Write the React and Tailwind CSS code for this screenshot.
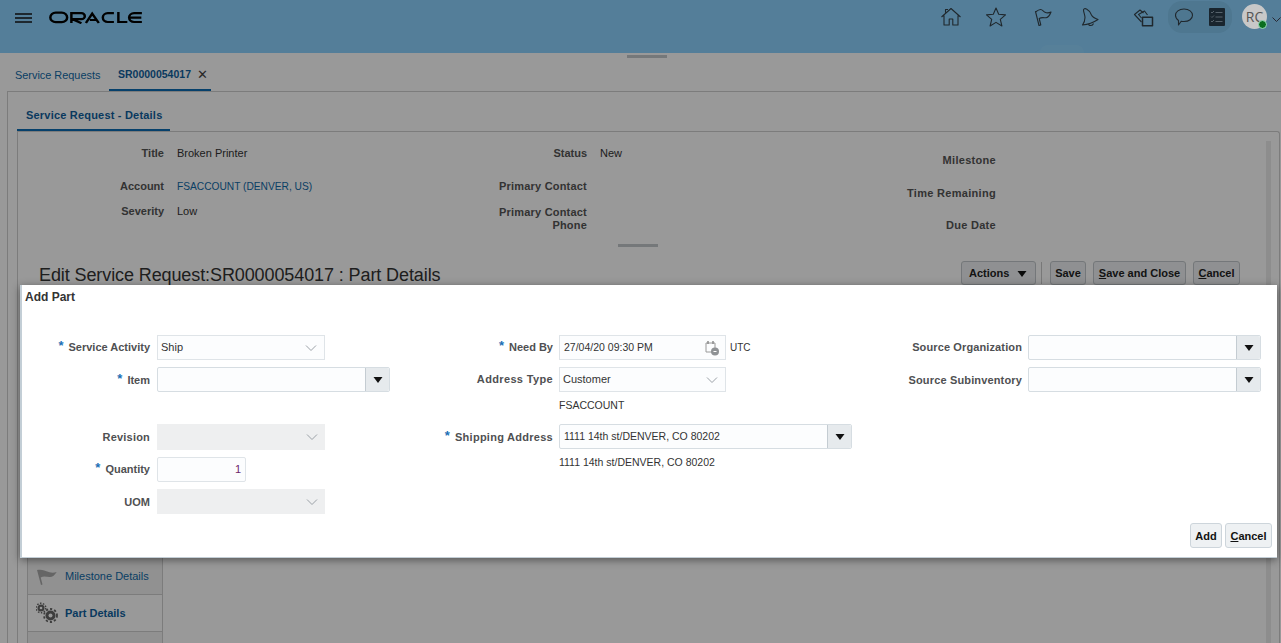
import React from "react";

const Caret = ({ className = "" }) => (
  <svg width="10" height="6" viewBox="0 0 10 6" className={className}>
    <path d="M.5 0h9L5 6z" fill="#111" />
  </svg>
);

const Chevron = () => (
  <svg width="12" height="7" viewBox="0 0 12 7" className="absolute right-[7px] top-1/2 -translate-y-1/2">
    <path d="M1 1l5 5 5-5" fill="none" stroke="#9aa0a6" strokeWidth="1" />
  </svg>
);

const Star = () => <span className="text-[#1c6fb5] text-[13px] leading-none mr-[5px] relative -top-[1px]">*</span>;

const FLabel = ({ req, children, w, t = "" }) => (
  <div className={`shrink-0 text-right font-bold text-[#4f5052] text-[11px] leading-[13px] whitespace-nowrap ${w} ${t}`}>
    {req && <Star />}
    {children}
  </div>
);

const Select = ({ w, value, disabled, h = "h-[25px]" }) => (
  <div className={`relative ${h} flex items-center pl-[3px] text-[11px] text-[#333] ${w} ${disabled ? "bg-[#eeeff0]" : "bg-[#fcfdfe] border border-[#dfe4e8]"}`}>
    {value}
    <Chevron />
  </div>
);

const Combo = ({ w, value }) => (
  <div className={`flex shrink-0 h-[25px] rounded-[2px] border border-[#d6dde2] bg-[#fcfdfe] ${w}`}>
    <div className="flex-1 flex items-center pl-[4px] text-[10.5px] text-[#333]">{value}</div>
    <div className="w-[24px] flex items-center justify-center border-l border-[#c4ccd2] bg-[#e6eaed] rounded-r-[2px]">
      <Caret />
    </div>
  </div>
);

const Ghost = ({ className, children }) => (
  <div className={`h-[24px] pt-[1px] flex items-center justify-center rounded-[3px] border border-[#c2c7cb] bg-[#eef1f3] font-bold text-[11px] text-[#222] ${className}`}>
    {children}
  </div>
);

const Ico = ({ children, className = "" }) => (
  <svg width="24" height="24" viewBox="0 0 24 24" fill="none" stroke="#35424b" strokeWidth="1.1" strokeLinejoin="round" className={className}>
    {children}
  </svg>
);

function TopBar() {
  return (
    <div className="h-[53px] bg-[#8cd3ff] flex items-start relative">
      <div className="mt-[13px] ml-[15px] flex flex-col gap-[2px] w-[17px]">
        <div className="h-[2px] bg-[#33434f]" />
        <div className="h-[2px] bg-[#33434f]" />
        <div className="h-[2px] bg-[#33434f]" />
      </div>
      <svg width="94" height="13" viewBox="0 0 84 13" preserveAspectRatio="none" className="ml-[17px] mt-[11px]" fill="none" stroke="#000" strokeWidth="2.2">
        <rect x="1.2" y="1.6" width="15" height="9.6" rx="4.8" />
        <path d="M20 12V2.200h9a3 3 0 010 6h-8l8 4" />
        <path d="M33 12l5.600-9.400L44.500 12M36.500 9h6" />
        <path d="M58 2.200h-5.500a4.400 4.400 0 000 8.800H58" />
        <path d="M62 1v10h8" />
        <path d="M83 2.200h-7a4.400 4.400 0 000 8.800h7M72.500 6.600h10" />
      </svg>
      <div className="ml-auto flex items-start">
        <Ico className="mt-[5px] mr-[21px]"><path d="M2.500 12L12 3.500l9.500 8.500M5 10.500V20h5.200v-6h3.600v6H19v-9.500M6.500 7.500V4.500H9" /></Ico>
        <Ico className="mt-[5px] mr-[23px]"><path d="M12 3l2.700 6.300 6.800.6-5.200 4.400 1.600 6.700-5.900-3.600-5.900 3.600 1.600-6.700-5.200-4.400 6.800-.6z" /></Ico>
        <Ico className="mt-[5px] mr-[23px]"><path d="M4.500 6.500L8 20.500l1.800-.5-1.600-6.500c2.500-1.500 5-.5 7-.8 2-.4 3.800-3 4.800-5.700-2 1-4 1.200-6 .3-1.500-.7-2.500-2.800-4.500-2.800-1.500 0-3 1-5 2.500z" /></Ico>
        <Ico className="mt-[5px] mr-[29px]"><path d="M4.500 20c1.500-2 2.500-4.500 2.500-7.500C7 10 5.500 7 5.500 5c0-1.300 1.500-1.800 3-1 3 1.500 4 3.500 5 6 1 2 3.500 3.500 6.500 4.500-4.500 3-10 5-15.500 5.500zM10.500 18.500c0 2.500 4 3 5 0" /></Ico>
        <Ico className="mt-[5px] mr-[13px]">
          <path d="M10.500 17L3.500 9.500 9 5l3.500 3" />
          <path d="M10.500 13L7.500 9.500l6-3.500 3 4" />
          <rect x="11.500" y="12.300" width="10" height="8.400" strokeWidth="1.500" />
        </Ico>
        <div className="mt-[1px] h-[32px] w-[64px] rounded-[14px] bg-[#83c6f0] flex items-center">
          <Ico className="ml-[4px]"><path d="M12 4c5 0 8.500 2.800 8.500 6.300s-3.500 6.200-8.500 6.200c-1 0-2 0-2.800-.3L6.500 20v-4.500C4.800 14.300 3.500 12.500 3.500 10.300 3.500 6.800 7 4 12 4z" /></Ico>
          <svg width="16" height="18" viewBox="0 0 16 18" className="ml-[13px]">
            <rect width="16" height="18" rx="1" fill="#2b3e4d" />
            <path d="M6.500 4.500h7M6.500 9h7M6.500 13.500h7" stroke="#8fa4b2" strokeWidth="1.200" />
            <path d="M2 4l1 1 2-2M2 8.500l1 1 2-2M2 13l1 1 2-2" stroke="#8fa4b2" fill="none" strokeWidth="1" />
          </svg>
        </div>
        <div className="relative z-10 ml-[10px] mt-[4px] w-[25px] h-[25px] rounded-full bg-[#c8c8c8] flex items-center justify-center text-[14px] text-[#555] font-['Open_Sans',sans-serif]">
          RC
          <span className="absolute w-[9px] h-[9px] rounded-full bg-[#0a6e1e] border border-[#9db] right-0 bottom-0" />
        </div>
        <svg width="9" height="6" viewBox="0 0 9 6" className="ml-[5px] mt-[17px]">
          <path d="M.5.500l4 4 4-4" fill="none" stroke="#445" />
        </svg>
      </div>
      <div className="absolute left-[1040px] bottom-0 w-[44px] h-[8px] rounded-t-full bg-white/5" />
    </div>
  );
}

function Page() {
  return (
    <div className="w-[1281px] h-[643px] overflow-hidden bg-white">
      <TopBar />
      <div className="flex justify-center h-[5px] pl-[13px]">
        <div className="w-[40px] h-[3px] bg-[#c4c9cc] mt-[2px]" />
      </div>
      <div className="flex h-[33px] pl-[15px] items-stretch text-[11px]">
        <div className="flex items-center text-[#0f6aa8] w-[94px] pt-[2px] text-[10.9px] whitespace-nowrap">Service Requests</div>
        <div className="flex items-center pl-[9px] w-[102px] pt-[2px] border-b-2 border-[#0a6bb3] font-bold text-[10.5px] text-[#0f5f9e]">
          SR0000054017
          <span className="ml-[6px] text-[13px] font-normal text-[#444] leading-none">✕</span>
        </div>
      </div>
      <div className="ml-[7px] border-l border-t border-[#cfcfcf] h-[552px] pl-[8px] relative">
        <div className="flex h-[39px] pl-[1px]">
          <div className="w-[153px] border-b-2 border-[#0a6bb3] font-bold text-[11px] tracking-[0.2px] text-[#0f5f9e] flex items-center pl-[9px] pt-[9px]">
            Service Request - Details
          </div>
        </div>
        <div className="ml-[1px] mr-[1px] border-l border-t border-r rounded-tr-[3px] border-[#cfcfcf] h-[513px] relative">
          <div className="grid grid-cols-[146px_170px_253px_60px_1fr] text-[11px] leading-[13px] text-[#333] pt-[15px]">
            <div className="font-bold text-[#555] text-right">Title</div>
            <div className="pl-[13px]">Broken Printer</div>
            <div className="font-bold text-[#555] text-right">Status</div>
            <div className="pl-[13px]">New</div>
            <div />
          </div>
          <div className="grid grid-cols-[146px_170px_253px_60px_1fr] text-[11px] leading-[13px] text-[#333] pt-[20px]">
            <div className="font-bold text-[#555] text-right">Account</div>
            <div className="pl-[13px] text-[10.2px] text-[#0f6aa8] whitespace-nowrap">FSACCOUNT (DENVER, US)</div>
            <div className="font-bold text-[#555] text-right tracking-[0.2px]">Primary Contact</div>
            <div />
            <div />
          </div>
          <div className="grid grid-cols-[146px_170px_253px_60px_1fr] text-[11px] leading-[13px] text-[#333] pt-[12px]">
            <div className="font-bold text-[#555] text-right">Severity</div>
            <div className="pl-[13px]">Low</div>
            <div className="font-bold text-[#555] text-right pt-[1px] tracking-[0.2px]">Primary Contact<br />Phone</div>
            <div />
            <div />
          </div>
          <div className="absolute left-[800px] top-[22px] w-[178px] flex flex-col gap-[19.5px] items-end text-[11px] leading-[13px] tracking-[0.3px] font-bold text-[#555]">
            <div>Milestone</div>
            <div>Time Remaining</div>
            <div>Due Date</div>
          </div>
          <div className="flex justify-center mt-[12px] pr-[22px] h-[3px]">
            <div className="w-[40px] h-[3px] bg-[#c4c9cc]" />
          </div>
          <div className="flex items-start mt-[15px] pl-[21px] pr-[39px]">
            <div className="text-[18px] leading-[24px] pt-[1px] tracking-[-0.1px] text-[#333]">Edit Service Request:SR0000054017 : Part Details</div>
            <div className="ml-auto flex items-center -mt-[1px]">
              <Ghost className="w-[75px] !justify-between px-[7px]">Actions <Caret className="mr-[1px]" /></Ghost>
              <div className="w-px h-[22px] bg-[#c8c8c8] ml-[5px] mr-[8px]" />
              <Ghost className="w-[36px] mr-[7px]">Save</Ghost>
              <Ghost className="w-[93px] mr-[7px]"><span><u>S</u>ave and Close</span></Ghost>
              <Ghost className="w-[47px]"><span><u>C</u>ancel</span></Ghost>
            </div>
          </div>
          <div className="mt-[271px] ml-[9px] w-[136px] border-x border-[#cfcfcf] text-[11px]">
            <div className="h-[37px] flex items-center border-b border-[#cfcfcf] bg-[#f2f2f2]">
              <svg width="22" height="20" viewBox="0 0 22 20" className="ml-[8px] mr-[7px]">
                <path d="M1 4l4 15 1.500-.5-1.800-7c3-2 6-.5 9-.5 3 0 5-2 7-5-3 1-5 1-8 0-4-1.500-7-3-11.700-2z" fill="#a8a8a8" />
              </svg>
              <span className="text-[#0f6aa8]">Milestone Details</span>
            </div>
            <div className="h-[37px] flex items-center border-b border-[#cfcfcf] bg-white">
              <svg width="22" height="22" viewBox="0 0 22 22" className="ml-[8px] mr-[7px]" fill="#666">
                <circle cx="5" cy="6" r="3.500" /><circle cx="5" cy="6" r="1.300" fill="#fff" />
                <circle cx="5" cy="6" r="4.800" fill="none" stroke="#666" strokeWidth="1.400" strokeDasharray="1.500 1.500" />
                <circle cx="14.500" cy="13.500" r="5" /><circle cx="14.500" cy="13.500" r="2" fill="#fff" />
                <circle cx="14.500" cy="13.500" r="6.500" fill="none" stroke="#666" strokeWidth="1.800" strokeDasharray="2.200 2" />
              </svg>
              <span className="font-bold text-[#0f5f9e]">Part Details</span>
            </div>
            <div className="h-[20px] bg-[#f2f2f2]" />
          </div>
          <div className="absolute right-[8px] top-[9px] bottom-0 w-[5px] bg-[#ececec]" />
        </div>
      </div>
    </div>
  );
}

function Dialog() {
  return (
    <div className="absolute left-[20px] top-[285px] w-[1257px] h-[273px] bg-white border-l-2 border-b border-[#c3ced6] shadow-[0_2px_8px_rgba(0,0,0,0.45)] font-['Liberation_Sans',Arial,sans-serif]">
      <div className="font-bold text-[12px] leading-[14px] text-[#333] pl-[3px] pt-[5px]">Add Part</div>
      <div className="flex mt-[31px]">
        <div className="w-[368px] flex flex-col">
          <div className="flex items-center gap-[7px]">
            <FLabel req w="w-[128px]" t="pb-[2px]">Service Activity</FLabel>
            <Select w="w-[168px]" value="Ship" />
          </div>
          <div className="flex items-center gap-[7px] mt-[7px]">
            <FLabel req w="w-[128px]">Item</FLabel>
            <Combo w="w-[233px]" />
          </div>
          <div className="flex items-center gap-[7px] mt-[32px]">
            <FLabel w="w-[128px]" t="tracking-[0.2px]">Revision</FLabel>
            <Select w="w-[168px]" h="h-[26px]" disabled />
          </div>
          <div className="flex items-center gap-[7px] mt-[7px]">
            <FLabel req w="w-[128px]" t="pb-[2px]">Quantity</FLabel>
            <div className="w-[89px] h-[25px] border border-[#dfe4e8] rounded-[2px] bg-[#fcfdfe] text-right pr-[4px] text-[11px] leading-[23px] text-[#6d1f6a]">1</div>
          </div>
          <div className="flex items-center gap-[7px] mt-[7px]">
            <FLabel w="w-[128px]" t="pt-[2px]">UOM</FLabel>
            <Select w="w-[168px]" disabled />
          </div>
        </div>
        <div className="w-[452px] flex flex-col">
          <div className="flex items-center gap-[6px]">
            <FLabel req w="w-[163px]" t="pb-[2px]">Need By</FLabel>
            <div className="relative w-[167px] h-[25px] border border-[#dfe4e8] bg-[#fcfdfe] flex items-center pl-[4px] text-[10.5px] text-[#333]">
              27/04/20 09:30 PM
              <svg width="16" height="16" viewBox="0 0 16 16" className="absolute right-[5px] top-[4px]">
                <path d="M2 3h9v9H2z" fill="none" stroke="#9a9a9a" />
                <path d="M4 1v3M9 1v3" stroke="#8a8a8a" strokeWidth="1.500" />
                <circle cx="11" cy="11.500" r="4" fill="#8f9295" />
                <path d="M9.500 11.500h3" stroke="#fff" />
              </svg>
            </div>
            <span className="ml-[-2px] text-[10px] text-[#333]">UTC</span>
          </div>
          <div className="flex items-center gap-[6px] mt-[7px]">
            <FLabel w="w-[163px]" t="tracking-[0.35px]">Address Type</FLabel>
            <Select w="w-[167px]" value="Customer" />
          </div>
          <div className="ml-[169px] mt-[7px] h-[13px] leading-[13px] text-[10.5px] text-[#333]">FSACCOUNT</div>
          <div className="flex items-center gap-[6px] mt-[12px]">
            <FLabel req w="w-[163px]" t="tracking-[0.27px]">Shipping Address</FLabel>
            <Combo w="w-[293px]" value="1111 14th st/DENVER, CO 80202" />
          </div>
          <div className="ml-[169px] mt-[7px] text-[10.5px] leading-[13px] text-[#333]">1111 14th st/DENVER, CO 80202</div>
        </div>
        <div className="flex flex-col">
          <div className="flex items-center gap-[6px]">
            <FLabel w="w-[180px]" t="tracking-[0.12px]">Source Organization</FLabel>
            <Combo w="w-[233px]" />
          </div>
          <div className="flex items-center gap-[6px] mt-[7px]">
            <FLabel w="w-[180px]" t="tracking-[0.15px] pt-[2px]">Source Subinventory</FLabel>
            <Combo w="w-[233px]" />
          </div>
        </div>
      </div>
      <div className="absolute right-[5px] bottom-[9px] flex gap-[3px]">
        <div className="h-[25px] w-[32px] pt-[1px] flex items-center justify-center rounded-[3px] border border-[#cdd5db] bg-[#eef1f3] font-bold text-[11px] text-[#111]">Add</div>
        <div className="h-[25px] w-[47px] pt-[1px] flex items-center justify-center rounded-[3px] border border-[#cdd5db] bg-[#eef1f3] font-bold text-[11px] text-[#111]"><span><u>C</u>ancel</span></div>
      </div>
    </div>
  );
}

export default function App() {
  return (
    <div className="relative w-[1281px] h-[643px] overflow-hidden font-['Liberation_Sans',Arial,sans-serif]">
      <Page />
      <div className="absolute inset-0 bg-black/40" />
      <Dialog />
    </div>
  );
}
